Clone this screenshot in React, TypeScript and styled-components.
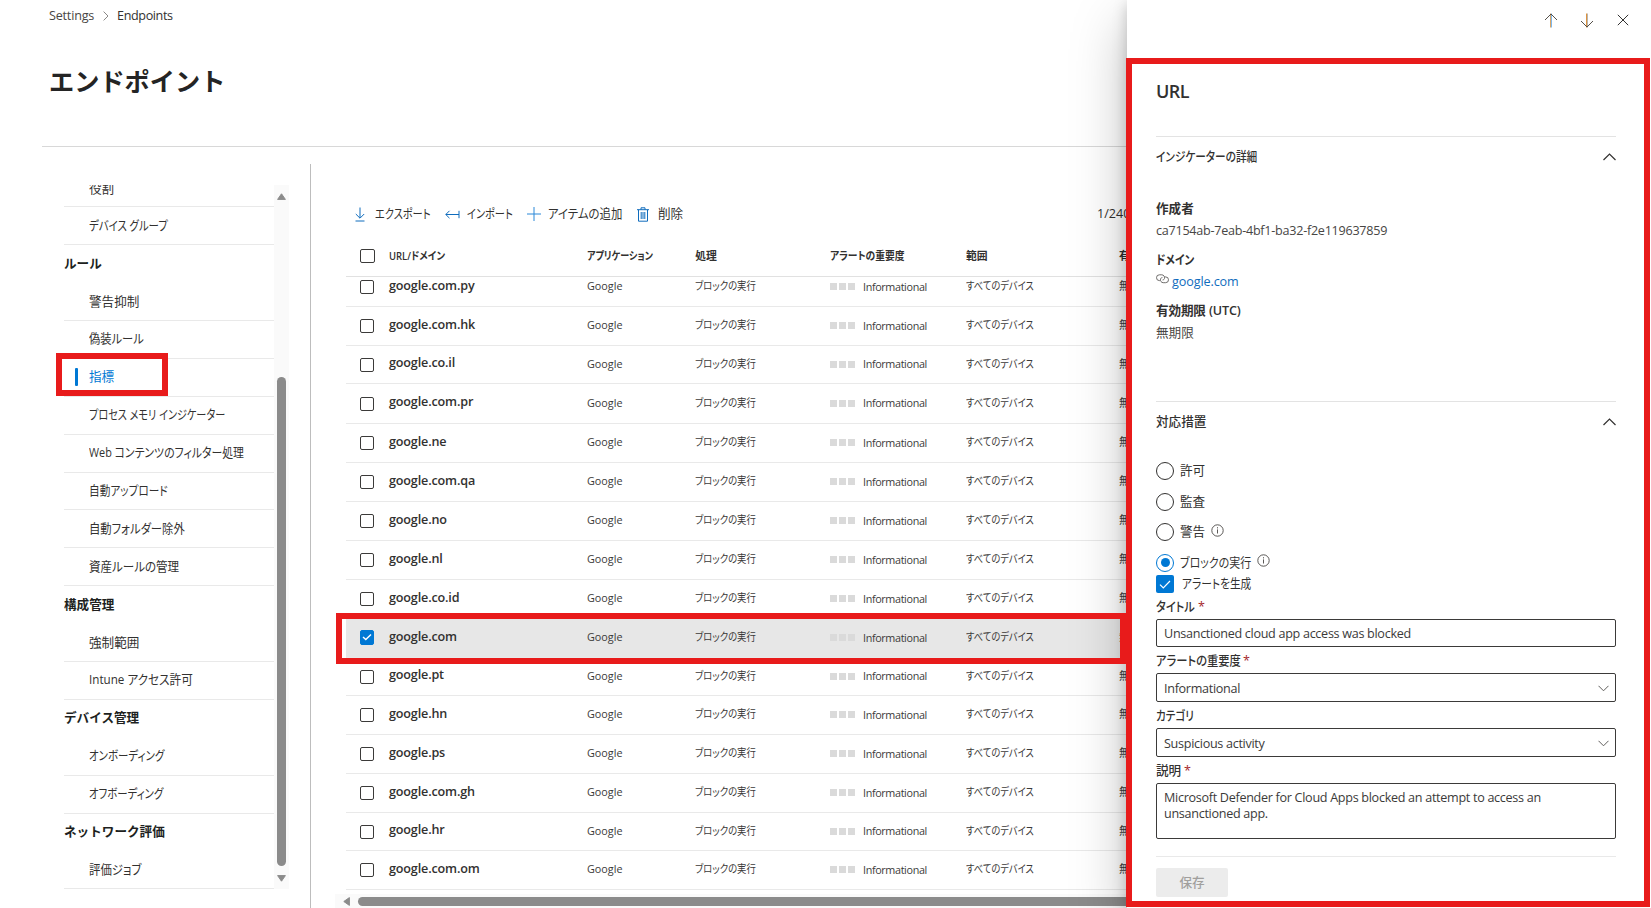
import React from 'react';
import styled, { createGlobalStyle, css } from 'styled-components';

const Global = createGlobalStyle`
  *, *::before, *::after { box-sizing: border-box; }
  body { margin: 0; background: #fff; overflow: hidden; }
`;

const Page = styled.div`
  position: relative;
  width: 1651px;
  height: 908px;
  overflow: hidden;
  background: #fff;
  color: #323130;
  font-family: 'Open Sans', 'Noto Sans CJK JP', sans-serif;
  font-size: 12.6px;
  line-height: 18px;
`;

/* Proportional Japanese text: $x condenses the kana, $ls tracks Latin runs. */
const Txt = styled.span<{ $x?: number; $ls?: number }>`
  display: inline-block;
  white-space: nowrap;
  font-feature-settings: 'palt';
  transform-origin: left center;
  ${p => p.$x && css`transform: scaleX(${p.$x});`}
  ${p => p.$ls && css`letter-spacing: ${p.$ls}px;`}
`;

/* ---------- page header ---------- */
const Header = styled.header`
  height: 147px;
  margin-left: 42px;
  padding: 6px 0 0 7px;
  border-bottom: 1px solid #d8d8d8;
`;
const Crumbs = styled.nav`
  display: flex;
  align-items: center;
  height: 19px;
  color: #484644;
  svg { margin: 0 8px 0 9px; }
`;
const Current = styled(Txt)`color: #323130;`;
const Title = styled.h1`
  margin: 38px 0 0;
  font-size: 25.2px;
  line-height: 36px;
  font-weight: 700;
  color: #242424;
`;

const Body = styled.div`
  display: flex;
  height: 761px;
`;

/* ---------- settings navigation ---------- */
const Side = styled.aside`
  display: flex;
  width: 311px;
  height: 744px;
  margin-top: 17px;
  padding: 21px 0 0 64px;
  border-right: 1px solid #bdbdbd;
`;
const SideList = styled.div`
  width: 210px;
  height: 704px;
  overflow: hidden;
`;
const Group = styled.h2`
  display: flex;
  align-items: center;
  height: 37.9px;
  margin: 0;
  padding-bottom: 1px;
  font-size: 12.6px;
  font-weight: 700;
  color: #201f1e;
`;
const Item = styled.a<{ $active?: boolean; $first?: boolean }>`
  display: flex;
  align-items: center;
  height: 37.9px;
  padding-left: ${p => (p.$active ? 11 : 25)}px;
  border-bottom: 1px solid #e9e9e9;
  color: ${p => (p.$active ? '#0078d4' : '#323130')};
  ${p => p.$first && css`
    margin-top: -15.6px;
    padding-top: 2px;
  `}
`;
const ActiveBar = styled.i`
  width: 3px;
  height: 18px;
  margin-right: 11px;
  border-radius: 1px;
  background: #0078d4;
`;
const VScroll = styled.div`
  display: flex;
  flex-direction: column;
  align-items: center;
  width: 15px;
  height: 704px;
  padding: 8px 0 7px;
  background: #fafafa;
  svg { flex: none; }
`;
const VThumb = styled.div`
  width: 9px;
  height: 489px;
  margin: auto 0 9px;
  border-radius: 5px;
  background: #8b8b8b;
`;

/* ---------- indicator table ---------- */
const Main = styled.main`
  width: 900px;
  padding-left: 24px;
`;
const Tools = styled.div`
  display: flex;
  align-items: center;
  height: 20px;
  margin: 57px 0 0 20px;
`;
const Tool = styled.button<{ $w: number; $gap: number }>`
  display: flex;
  align-items: center;
  gap: ${p => p.$gap}px;
  width: ${p => p.$w}px;
  padding: 0;
  border: 0;
  background: none;
  color: inherit;
  font: inherit;
  white-space: nowrap;
  svg { flex: none; }
`;
const Count = styled.span`
  margin-left: 393px;
  white-space: nowrap;
`;
const Cols = css`
  display: grid;
  grid-template-columns: 29px 198px 108.3px 135.2px 135.5px 153px 100px;
  align-items: center;
  margin-left: 11px;
`;
const HeadRow = styled.div`
  ${Cols}
  height: 40px;
  margin-top: 13px;
  padding: 0 0 1px 14px;
  border-bottom: 1px solid #e1e1e1;
  font-size: 10.8px;
  font-weight: 600;
`;
const Rows = styled.div`
  height: 613px;
  overflow: hidden;
`;
const Row = styled.div<{ $h: number; $on?: boolean }>`
  ${Cols}
  height: ${p => p.$h}px;
  padding: 0 0 1px 14px;
  border-bottom: 1px solid #e9e9e9;
  background: ${p => (p.$on ? '#e7e7e7' : '#fff')};
  font-size: 10.8px;
  color: #3b3a39;
  &:first-child { margin-top: -9px; }
  & > ${Txt} { margin-top: -1px; }
`;
const Box = styled.span<{ $wide?: boolean; $on?: boolean }>`
  display: flex;
  align-items: center;
  justify-content: center;
  width: ${p => (p.$wide ? 15 : 14)}px;
  height: ${p => (p.$on ? 15 : 14)}px;
  margin-top: ${p => (p.$wide || p.$on ? -1 : 1)}px;
  border: 1px solid ${p => (p.$on ? '#0078d4' : '#3b3a39')};
  border-radius: 2px;
  background: ${p => (p.$on ? '#0078d4' : '#fff')};
`;
const Domain = styled.span`
  font-size: 12.6px;
  font-weight: 600;
  letter-spacing: -0.16px;
  color: #323130;
  margin-top: -2px;
`;
const Severity = styled.span`
  display: flex;
  align-items: center;
  gap: 2px;
  i { width: 7px; height: 7px; background: #dadada; }
  span { margin-left: 5.5px; }
`;
const HScroll = styled.div`
  display: flex;
  align-items: center;
  gap: 8px;
  height: 15px;
  margin-top: 4px;
  padding-left: 8px;
  background: #fafafa;
  svg { flex: none; }
`;
const HThumb = styled.div`
  width: 900px;
  height: 9px;
  border-radius: 5px;
  background: #8b8b8b;
`;

/* ---------- detail drawer ---------- */
const Drawer = styled.section`
  position: absolute;
  top: 0;
  right: 0;
  width: 524px;
  height: 908px;
  padding: 0 35px 0 29px;
  background: #fff;
  box-shadow: 0 23px 52px rgba(0, 0, 0, 0.26), 0 4px 14px rgba(0, 0, 0, 0.2);
`;
const DrawerBar = styled.div`
  display: flex;
  justify-content: flex-end;
  align-items: center;
  gap: 22px;
  height: 40px;
  margin-right: -13px;
  svg:last-child { margin-left: 1px; }
`;
const DrawerTitle = styled.h2`
  height: 97px;
  margin: 0;
  padding-top: 38px;
  border-bottom: 1px solid #e3e3e3;
  font-size: 18px;
  line-height: 26px;
  font-weight: 600;
  letter-spacing: -0.5px;
`;
const Section = styled.h3`
  display: flex;
  align-items: center;
  justify-content: space-between;
  height: 40px;
  margin: 0;
  font-size: 12.6px;
  font-weight: 500;
`;
const Facts = styled.dl`
  height: 225px;
  margin: 0;
  padding-top: 22px;
  border-bottom: 1px solid #e3e3e3;
`;
const Term = styled.dt`
  height: 22px;
  line-height: 19px;
  font-weight: 600;
`;
const Desc = styled.dd`
  display: flex;
  height: 29px;
  margin: 0;
  line-height: 20px;
  color: #484644;
  svg { margin: 2px 3px 0 0; }
`;
const Link = styled.a`color: #0f6cbd;`;
const Radios = styled.div`
  margin-top: 13px;
`;
const Radio = styled.label<{ $h?: number }>`
  display: flex;
  align-items: center;
  height: ${p => p.$h ?? 31}px;
  color: #323130;
`;
const Dot = styled.span<{ $on?: boolean }>`
  display: flex;
  align-items: center;
  justify-content: center;
  width: 18px;
  height: 18px;
  margin-right: 6px;
  border: 1px solid ${p => (p.$on ? '#0078d4' : '#323130')};
  border-radius: 50%;
  &::after {
    content: '';
    width: 9px;
    height: 9px;
    border-radius: 50%;
    background: ${p => (p.$on ? '#0078d4' : 'transparent')};
  }
`;
const RadioText = styled.span<{ $w: number }>`
  width: ${p => p.$w}px;
  white-space: nowrap;
`;
const InfoWrap = styled.span`
  display: flex;
  height: 17px;
`;
const CheckLine = styled.label`
  display: flex;
  align-items: center;
  height: 18px;
  margin-top: -3px;
`;
const BigBox = styled.span`
  display: flex;
  align-items: center;
  justify-content: center;
  width: 18px;
  height: 18px;
  margin-right: 8px;
  border-radius: 2px;
  background: #0078d4;
`;
const FieldLabel = styled.div<{ $w: number }>`
  display: flex;
  align-items: center;
  height: 26px;
  padding-top: 2px;
  font-weight: 500;
  & > span:first-child { width: ${p => p.$w}px; }
  em { font-style: normal; color: #a4262c; line-height: 12px; }
`;
const Field = styled.div<{ $h: number; $multi?: boolean }>`
  display: flex;
  align-items: ${p => (p.$multi ? 'flex-start' : 'center')};
  justify-content: space-between;
  height: ${p => p.$h}px;
  padding: ${p => (p.$multi ? '6px 7px' : '2px 6px 0 7px')};
  border: 1px solid #3b3a39;
  border-radius: 2px;
  line-height: 16px;
  letter-spacing: -0.3px;
  color: #3b3a39;
  svg { margin-top: -1px; }
`;
const Footer = styled.footer`
  margin-top: 17px;
  padding-top: 11px;
  border-top: 1px solid #e9e9e9;
`;
const Save = styled.button`
  width: 72px;
  height: 29px;
  padding: 0;
  border: 0;
  border-radius: 2px;
  background: #ececec;
  color: #a19f9d;
  font: inherit;
  font-weight: 500;
`;

/* ---------- callout frames ---------- */
const Frame = styled.div<{ $x: number; $y: number; $w: number; $h: number }>`
  position: absolute;
  left: ${p => p.$x}px;
  top: ${p => p.$y}px;
  width: ${p => p.$w}px;
  height: ${p => p.$h}px;
  border: 6px solid #e81b1b;
  pointer-events: none;
`;

/* ---------- icons ---------- */
const Icon = ({ w, h, d, c = '#323130', sw = 1 }: { w: number; h: number; d: string; c?: string; sw?: number }) => (
  <svg width={w} height={h} viewBox={`0 0 ${w} ${h}`} fill="none" stroke={c} strokeWidth={sw}>
    <path d={d} />
  </svg>
);
const StemArrow = ({ head, stems }: { head: string; stems: [number, string][] }) => (
  <svg width="14" height="15" viewBox="0 0 14 15" fill="none">
    {stems.map(([x, c]) => (
      <path key={x} d={`M${x} .5v14`} stroke={c} />
    ))}
    <path d={head} stroke="#55504a" />
  </svg>
);
const Tri = ({ w, h, d }: { w: number; h: number; d: string }) => (
  <svg width={w} height={h} viewBox={`0 0 ${w} ${h}`} fill="#8b8b8b" stroke="#8b8b8b" strokeLinejoin="round">
    <path d={d} />
  </svg>
);
const Info = () => (
  <InfoWrap>
    <svg width="13" height="13" viewBox="0 0 13 13" fill="none" stroke="#484644" strokeWidth="0.9">
      <circle cx="6.5" cy="6.5" r="5.7" />
      <path d="M6.5 5.4v4.1M6.5 3.2v1.2" />
    </svg>
  </InfoWrap>
);
const Chain = () => (
  <svg width="13" height="10" viewBox="0 0 13 10" fill="none" stroke="#605e5c" strokeWidth="0.9">
    <path d="M4.2 6.6H3.4a2.9 2.9 0 0 1 0-5.8h2.4a2.9 2.9 0 0 1 2.7 3.6c-.2.9-1 1.6-1.9 1.6" />
    <path d="M8.8 2.9h.8a2.9 2.9 0 0 1 0 5.8H7.2a2.9 2.9 0 0 1-2.7-3.6c.2-.9 1-1.6 1.9-1.6" />
  </svg>
);
const UpChevron = () => <Icon w={13} h={8} sw={1.2} d="M.5 7 6.5 1l6 6" />;
const DownChevron = () => <Icon w={11} h={7} c="#605e5c" d="M.5.8l5 5 5-5" />;

type NavEntry = { t: string; x?: number; head?: boolean; on?: boolean };
const nav: NavEntry[] = [
  { t: '役割' },
  { t: 'デバイス グループ', x: 0.826 },
  { t: 'ルール', head: true },
  { t: '警告抑制' },
  { t: '偽装ルール', x: 0.895 },
  { t: '指標', on: true },
  { t: 'プロセス メモリ インジケーター', x: 0.805 },
  { t: 'Web コンテンツのフィルター処理', x: 0.863 },
  { t: '自動アップロード', x: 0.846 },
  { t: '自動フォルダー除外', x: 0.9 },
  { t: '資産ルールの管理', x: 0.915 },
  { t: '構成管理', head: true },
  { t: '強制範囲' },
  { t: 'Intune アクセス許可', x: 0.923 },
  { t: 'デバイス管理', head: true },
  { t: 'オンボーディング', x: 0.832 },
  { t: 'オフボーディング', x: 0.827 },
  { t: 'ネットワーク評価', head: true },
  { t: '評価ジョブ', x: 0.905 },
];

const rows: { d: string; h: number; on?: boolean }[] = [
  { d: 'google.com.py', h: 39 },
  { d: 'google.com.hk', h: 39 },
  { d: 'google.co.il', h: 38 },
  { d: 'google.com.pr', h: 40 },
  { d: 'google.ne', h: 39 },
  { d: 'google.com.qa', h: 39 },
  { d: 'google.no', h: 39 },
  { d: 'google.nl', h: 39 },
  { d: 'google.co.id', h: 39 },
  { d: 'google.com', h: 39, on: true },
  { d: 'google.pt', h: 38 },
  { d: 'google.hn', h: 39 },
  { d: 'google.ps', h: 39 },
  { d: 'google.com.gh', h: 39 },
  { d: 'google.hr', h: 38 },
  { d: 'google.com.om', h: 39 },
];

export default function App() {
  return (
    <Page>
      <Global />
      <Header>
        <Crumbs>
          <Txt $ls={-0.2}>Settings</Txt>
          <Icon w={6} h={10} c="#8a8886" d="M.6.6 5 5 .6 9.4" />
          <Current $ls={-0.4}>Endpoints</Current>
        </Crumbs>
        <Title>エンドポイント</Title>
      </Header>

      <Body>
        <Side>
          <SideList>
            {nav.map((n, i) =>
              n.head ? (
                <Group key={n.t}>{n.t}</Group>
              ) : (
                <Item key={n.t} $active={n.on} $first={i === 0}>
                  {n.on && <ActiveBar />}
                  <Txt $x={n.x}>{n.t}</Txt>
                </Item>
              ),
            )}
          </SideList>
          <VScroll>
            <Tri w={9} h={7} d="M4.5 .8 8.4 6.4H.6z" />
            <VThumb />
            <Tri w={9} h={7} d="M4.5 6.2 8.4 .6H.6z" />
          </VScroll>
        </Side>

        <Main>
          <Tools>
            <Tool $w={90} $gap={10}>
              <Icon w={10} h={15} c="#0f6cbd" d="M5 .5v10.5M.8 7 5 11.2 9.2 7M.5 14h9" />
              <Txt $x={0.81}>エクスポート</Txt>
            </Tool>
            <Tool $w={82} $gap={7}>
              <Icon w={15} h={9} c="#0f6cbd" d="M.8 4.5h13.2M4.5.8.8 4.5l3.7 3.7M14 .8v7.4" />
              <Txt $x={0.81}>インポート</Txt>
            </Tool>
            <Tool $w={110} $gap={7}>
              <Icon w={14} h={14} c="#2b88d8" d="M7 0v14M0 7h14" />
              <Txt $x={0.905}>アイテムの追加</Txt>
            </Tool>
            <Tool $w={67} $gap={9}>
              <Icon w={12} h={15} c="#0f6cbd" d="M0 2.7h12M4 2.7V.8h4v1.9M1.5 2.7v11.5h9V2.7M4.2 5v7M6 5v7M7.8 5v7" />
              <Txt>削除</Txt>
            </Tool>
            <Count>1/2400</Count>
          </Tools>

          <HeadRow>
            <Box $wide />
            <Txt $x={0.88}>URL/ドメイン</Txt>
            <Txt $x={0.842}>アプリケーション</Txt>
            <Txt>処理</Txt>
            <Txt $x={0.904}>アラートの重要度</Txt>
            <Txt>範囲</Txt>
            <Txt>有効期限</Txt>
          </HeadRow>
          <Rows>
            {rows.map(r => (
              <Row key={r.d} $h={r.h} $on={r.on}>
                <Box $on={r.on}>
                  {r.on && <Icon w={10} h={8} c="#fff" sw={1.4} d="M1 4l2.8 2.6L9 1.4" />}
                </Box>
                <Domain>{r.d}</Domain>
                <Txt>Google</Txt>
                <Txt $x={0.866}>ブロックの実行</Txt>
                <Severity>
                  <i />
                  <i />
                  <i />
                  <Txt $ls={-0.36}>Informational</Txt>
                </Severity>
                <Txt $x={0.857}>すべてのデバイス</Txt>
                <Txt>無期限</Txt>
              </Row>
            ))}
          </Rows>
          <HScroll>
            <Tri w={7} h={9} d="M.8 4.5 6.4 .6v7.8z" />
            <HThumb />
          </HScroll>
        </Main>
      </Body>

      <Drawer>
        <DrawerBar>
          <StemArrow head="M1 7l6-6 6 6" stems={[[6.5, '#d9a566'], [7.5, '#7db8ee']]} />
          <StemArrow head="M1 8l6 6 6-6" stems={[[6.5, '#dd9440'], [7.5, '#b9b4ae']]} />
          <Icon w={12} h={12} d="M.8.8l10.4 10.4M11.2.8.8 11.2" />
        </DrawerBar>
        <DrawerTitle>URL</DrawerTitle>
        <Section>
          <Txt $x={0.847}>インジケーターの詳細</Txt>
          <UpChevron />
        </Section>
        <Facts>
          <Term>作成者</Term>
          <Desc>
            <Txt $ls={-0.26}>ca7154ab-7eab-4bf1-ba32-f2e119637859</Txt>
          </Desc>
          <Term>
            <Txt $x={0.85}>ドメイン</Txt>
          </Term>
          <Desc>
            <Chain />
            <Link>
              <Txt $ls={-0.1}>google.com</Txt>
            </Link>
          </Desc>
          <Term>
            <Txt $ls={-0.15}>有効期限 (UTC)</Txt>
          </Term>
          <Desc>無期限</Desc>
        </Facts>
        <Section>
          対応措置
          <UpChevron />
        </Section>
        <Radios>
          <Radio>
            <Dot />
            <RadioText $w={31}>許可</RadioText>
          </Radio>
          <Radio>
            <Dot />
            <RadioText $w={31}>監査</RadioText>
          </Radio>
          <Radio $h={30}>
            <Dot />
            <RadioText $w={31}>警告</RadioText>
            <Info />
          </Radio>
          <Radio>
            <Dot $on />
            <RadioText $w={77}>
              <Txt $x={0.87}>ブロックの実行</Txt>
            </RadioText>
            <Info />
          </Radio>
          <CheckLine>
            <BigBox>
              <Icon w={12} h={9} c="#fff" sw={1.2} d="M1 4.6 4.3 8 11 1" />
            </BigBox>
            <Txt $x={0.85}>アラートを生成</Txt>
          </CheckLine>
        </Radios>

        <FieldLabel $w={42}>
          <Txt $x={0.89}>タイトル</Txt>
          <em>*</em>
        </FieldLabel>
        <Field $h={28}>Unsanctioned cloud app access was blocked</Field>
        <FieldLabel $w={87}>
          <Txt $x={0.896}>アラートの重要度</Txt>
          <em>*</em>
        </FieldLabel>
        <Field $h={29}>
          Informational
          <DownChevron />
        </Field>
        <FieldLabel $w={42}>
          <Txt $x={0.836}>カテゴリ</Txt>
        </FieldLabel>
        <Field $h={29}>
          Suspicious activity
          <DownChevron />
        </Field>
        <FieldLabel $w={28}>
          <Txt>説明</Txt>
          <em>*</em>
        </FieldLabel>
        <Field $h={56} $multi>
          <span>
            Microsoft Defender for Cloud Apps blocked an attempt to access an
            <br />
            unsanctioned app.
          </span>
        </Field>
        <Footer>
          <Save>保存</Save>
        </Footer>
      </Drawer>

      <Frame $x={56} $y={353} $w={112} $h={43} />
      <Frame $x={336} $y={613} $w={790} $h={51} />
      <Frame $x={1126} $y={58} $w={524} $h={849} />
    </Page>
  );
}
